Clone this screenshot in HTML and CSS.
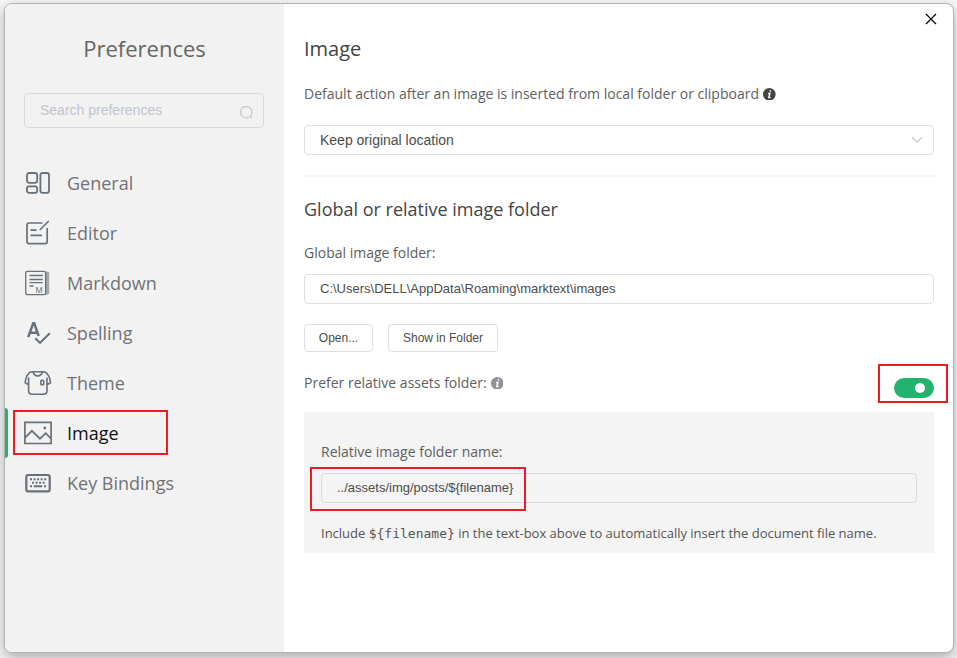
FILE: index.html
```html
<!DOCTYPE html>
<html lang="en">
<head>
<meta charset="utf-8">
<title>Preferences</title>
<link rel="stylesheet" href="styles.css">
</head>
<body>
<div class="window">
  <aside class="sidebar">
    <h1 class="title">Preferences</h1>
    <div class="search">
      <span>Search preferences</span>
      <svg class="search-icon" width="14" height="14" viewBox="0 0 14 14"><circle cx="7.2" cy="6.2" r="5.7"/><path d="M11.3 10.3l1.700 1.700"/></svg>
    </div>
    <nav class="nav">
      <a class="item"><svg class="icon" viewBox="0 0 28 28"><g stroke-width="1.8"><rect x="3" y="4" width="10.2" height="9.8" rx="2"/><rect x="3" y="17.4" width="10.2" height="6.4" rx="2"/><rect x="16.4" y="4" width="8.6" height="19.8" rx="2"/></g></svg><span>General</span></a>
      <a class="item"><svg class="icon" viewBox="0 0 28 28"><g stroke-width="1.7"><path d="M18.500 4H5.200Q3 4 3 6.200V22.500Q3 24.700 5.200 24.700H21Q23.200 24.700 23.200 22.500V9M6.500 11.200H12.500M6.500 16.400H18M15.800 11L24.800 2"/></g></svg><span>Editor</span></a>
      <a class="item"><svg class="icon" viewBox="0 0 28 28"><path class="shade" d="M22.200 3H24.800V24.500L22.200 25.600z"/><g stroke-width="1.300"><rect x="1.700" y="2.300" width="19.900" height="23.400" rx="1.600"/><path d="M5.500 6.500H18.800M5.500 10.500H18.800M5.500 13.700H18.800M5.500 17H9.500"/></g><text class="letter" x="11.500" y="24">M</text></svg><span>Markdown</span></a>
      <a class="item"><svg class="icon" viewBox="0 0 28 28"><path stroke-width="2.500" d="M4.200 18.200L9.200 4.300H10.200L14.700 17M6 13.700H13.200"/><path stroke-width="2.100" d="M11.300 19.300L16 23.900L25.800 14.300"/></svg><span>Spelling</span></a>
      <a class="item"><svg class="icon" viewBox="0 0 28 28"><g stroke-width="1.600"><path d="M4.600 15.700L1.200 13.800Q1.600 7 5.500 3.600Q6.600 2.700 8.500 2.700H19Q21 2.700 22 3.600Q26 7 26.500 13.800L23 15.700M4.600 8.500V21.800Q4.600 25.200 8 25.200H19.500Q23 25.200 23 21.800V8.500M9 2.800Q10 7 13.700 7Q17.500 7 18.500 2.800"/><rect x="16.900" y="11.200" width="2.800" height="4.600" rx=".8"/></g></svg><span>Theme</span></a>
      <a class="item active"><svg class="icon" viewBox="0 0 28 28"><path stroke-width="1.700" d="M.9 3.400H27.100V24.500H.9zM1.500 18.400L7.900 11.800L16 19.700L21.700 14.200L26.500 19.200"/><circle class="solid" cx="20.800" cy="9" r="1.400"/></svg><span>Image</span></a>
      <a class="item"><svg class="icon" viewBox="0 0 28 28"><rect x="2.300" y="6" width="23.400" height="16.400" rx="2" stroke-width="2.200"/><path stroke-width="1.900" stroke-dasharray="2 1.550" d="M6 10.300H22.200M8 13.700H21"/><path stroke-width="2" d="M6 17.300H8M9.700 17.300H18.300M20 17.300H22"/></svg><span>Key Bindings</span></a>
    </nav>
  </aside>
  <main class="main">
    <h2 class="heading">Image</h2>
    <p class="label default"><span>Default action after an image is inserted from local folder or clipboard</span><svg class="info dark" viewBox="0 0 12 12"><circle cx="6" cy="6" r="6"/><path d="M6.400 2.900h1.400M4.900 5.200h1.700L5.500 9h1.600"/></svg></p>
    <div class="field select"><span>Keep original location</span><svg width="12" height="8" viewBox="0 0 12 8"><path d="M1 1.200L6 6.200L11 1.200"/></svg></div>
    <hr class="rule">
    <h3 class="subheading">Global or relative image folder</h3>
    <p class="label global">Global image folder:</p>
    <div class="field path">C:\Users\DELL\AppData\Roaming\marktext\images</div>
    <div class="buttons"><button class="open">Open...</button><button class="show">Show in Folder</button></div>
    <div class="prefer">
      <p class="label"><span>Prefer relative assets folder:</span><svg class="info" viewBox="0 0 12 12"><circle cx="6" cy="6" r="6"/><path d="M6.400 2.900h1.400M4.900 5.200h1.700L5.500 9h1.600"/></svg></p>
      <div class="toggle"><i class="knob"></i></div>
    </div>
    <section class="panel">
      <p class="label">Relative image folder name:</p>
      <div class="field template">../assets/img/posts/${filename}</div>
      <p class="note"><span>Include </span><code>${filename}</code><span> in the text-box above to automatically insert the document file name.</span></p>
    </section>
  </main>
  <svg class="close" viewBox="0 0 12 12"><path d="M1 1L11 11M11 1L1 11"/></svg>
  <div class="mark mark-nav"></div>
  <div class="mark mark-toggle"></div>
  <div class="mark mark-field"></div>
</div>
</body>
</html>
```
FILE: styles.css
```css
* { box-sizing: border-box; }
body {
  margin: 0;
  height: 658px;
  padding: 3px 0 0 4px;
  overflow: hidden;
  background: #f6f6f6;
  font-family: "Open Sans", sans-serif;
  font-weight: 400;
  color: #444;
}
h1, h2, h3, p { margin: 0; font-weight: 400; white-space: nowrap; }
svg { display: block; fill: none; flex: none; }
.window {
  position: relative;
  display: flex;
  width: 950px;
  height: 650px;
  border: 1px solid #b2b2b2;
  border-radius: 8px;
  background: #fff;
  box-shadow: 0 5px 14px rgba(0, 0, 0, .3);
}
.sidebar { width: 279px; background: #f2f2f2; border-radius: 7px 0 0 7px; }
.title {
  padding-top: 28px;
  height: 89px;
  font-size: 22px;
  line-height: 32px;
  text-align: center;
  color: #666;
}
.search {
  display: flex;
  justify-content: space-between;
  align-items: center;
  width: 240px;
  height: 35px;
  margin-left: 19px;
  padding: 0 10px 2px 15px;
  border: 1px solid #d9d9d9;
  border-radius: 4px;
  font: 14px "Liberation Sans", sans-serif;
  color: #c0c4cc;
}
.search-icon { stroke: #c0c4cc; stroke-width: 1.1; margin-top: 6px; }
.nav { margin-top: 30px; }
.item {
  display: flex;
  align-items: center;
  height: 50px;
  padding-left: 19px;
  gap: 15px;
  font-size: 18px;
  color: #717376;
  white-space: nowrap;
}
.active { position: relative; color: #111; }
.active::before {
  content: "";
  position: absolute;
  left: 0;
  top: 0;
  width: 3px;
  height: 50px;
  border-radius: 0 3px 3px 0;
  background: #24b36f;
}
.icon { width: 28px; height: 28px; stroke: #68707a; }
.shade { fill: #a5aab2; stroke: #8d939c; stroke-width: .6; }
.letter { font: 8.5px "Liberation Sans", sans-serif; fill: #68707a; stroke: none; }
.solid { fill: #68707a; stroke: none; }
.main { width: 669px; padding: 29px 19px 0 20px; }
.heading { font-size: 20px; line-height: 32px; color: #444; }
.label {
  display: flex;
  align-items: center;
  font-size: 14px;
  line-height: 20px;
  color: #606060;
}
.default { margin-top: 19px; }
.info { width: 12.6px; height: 12.6px; margin-left: 4px; fill: #909399; }
.info path { fill: none; stroke: #fff; stroke-width: 1.3; }
.dark { fill: #444; }
.field {
  display: flex;
  align-items: center;
  height: 30px;
  padding: 0 15px;
  border: 1px solid #e0e0e2;
  border-radius: 4px;
  font: 13px "Liberation Sans", sans-serif;
  color: #4c4c4c;
  white-space: pre;
}
.select { margin-top: 21px; padding-right: 10px; justify-content: space-between; font-size: 14px; }
.select svg { stroke: #c0c4cc; stroke-width: 1.2; }
.rule { height: 2px; margin: 20px 0 0; border: 0; background: #f4f4f4; }
.subheading { margin-top: 17px; font-size: 18px; line-height: 30px; color: #444; }
.global { margin-top: 19px; }
.path { margin-top: 11px; padding-bottom: 2px; }
.buttons { display: flex; gap: 15px; margin-top: 20px; }
button {
  height: 28px;
  padding: 0 0 1px;
  border: 1px solid #dcdfe6;
  border-radius: 4px;
  background: #fff;
  font: 12px "Liberation Sans", sans-serif;
  color: #4c4c4c;
}
.open { width: 69px; }
.show { width: 110px; }
.prefer {
  display: flex;
  justify-content: space-between;
  align-items: flex-start;
  height: 60px;
  padding-top: 21px;
}
.toggle {
  display: flex;
  align-items: center;
  justify-content: flex-end;
  width: 40px;
  height: 20px;
  margin-top: 5px;
  padding-right: 9px;
  border-radius: 10px;
  background: #24b36f;
}
.knob { width: 10px; height: 10px; border-radius: 50%; background: #fff; }
.panel { height: 141px; padding: 30px 17px 0; background: #f4f4f4; }
.template { margin-top: 11px; padding-bottom: 1px; border-color: #dadada; }
.note { margin-top: 20px; font-size: 13px; line-height: 20px; white-space: pre; color: #555; }
code { font: 13px "DejaVu Sans Mono", monospace; }
.close { position: absolute; left: 920px; top: 9px; width: 12px; height: 12px; stroke: #000; stroke-width: 1.2; }
.mark { position: absolute; border: 2px solid #ed1c24; }
.mark-nav { left: 8px; top: 406px; width: 155px; height: 45px; }
.mark-toggle { left: 873px; top: 360px; width: 70px; height: 39px; }
.mark-field { left: 305px; top: 463px; width: 216px; height: 44px; }
```
